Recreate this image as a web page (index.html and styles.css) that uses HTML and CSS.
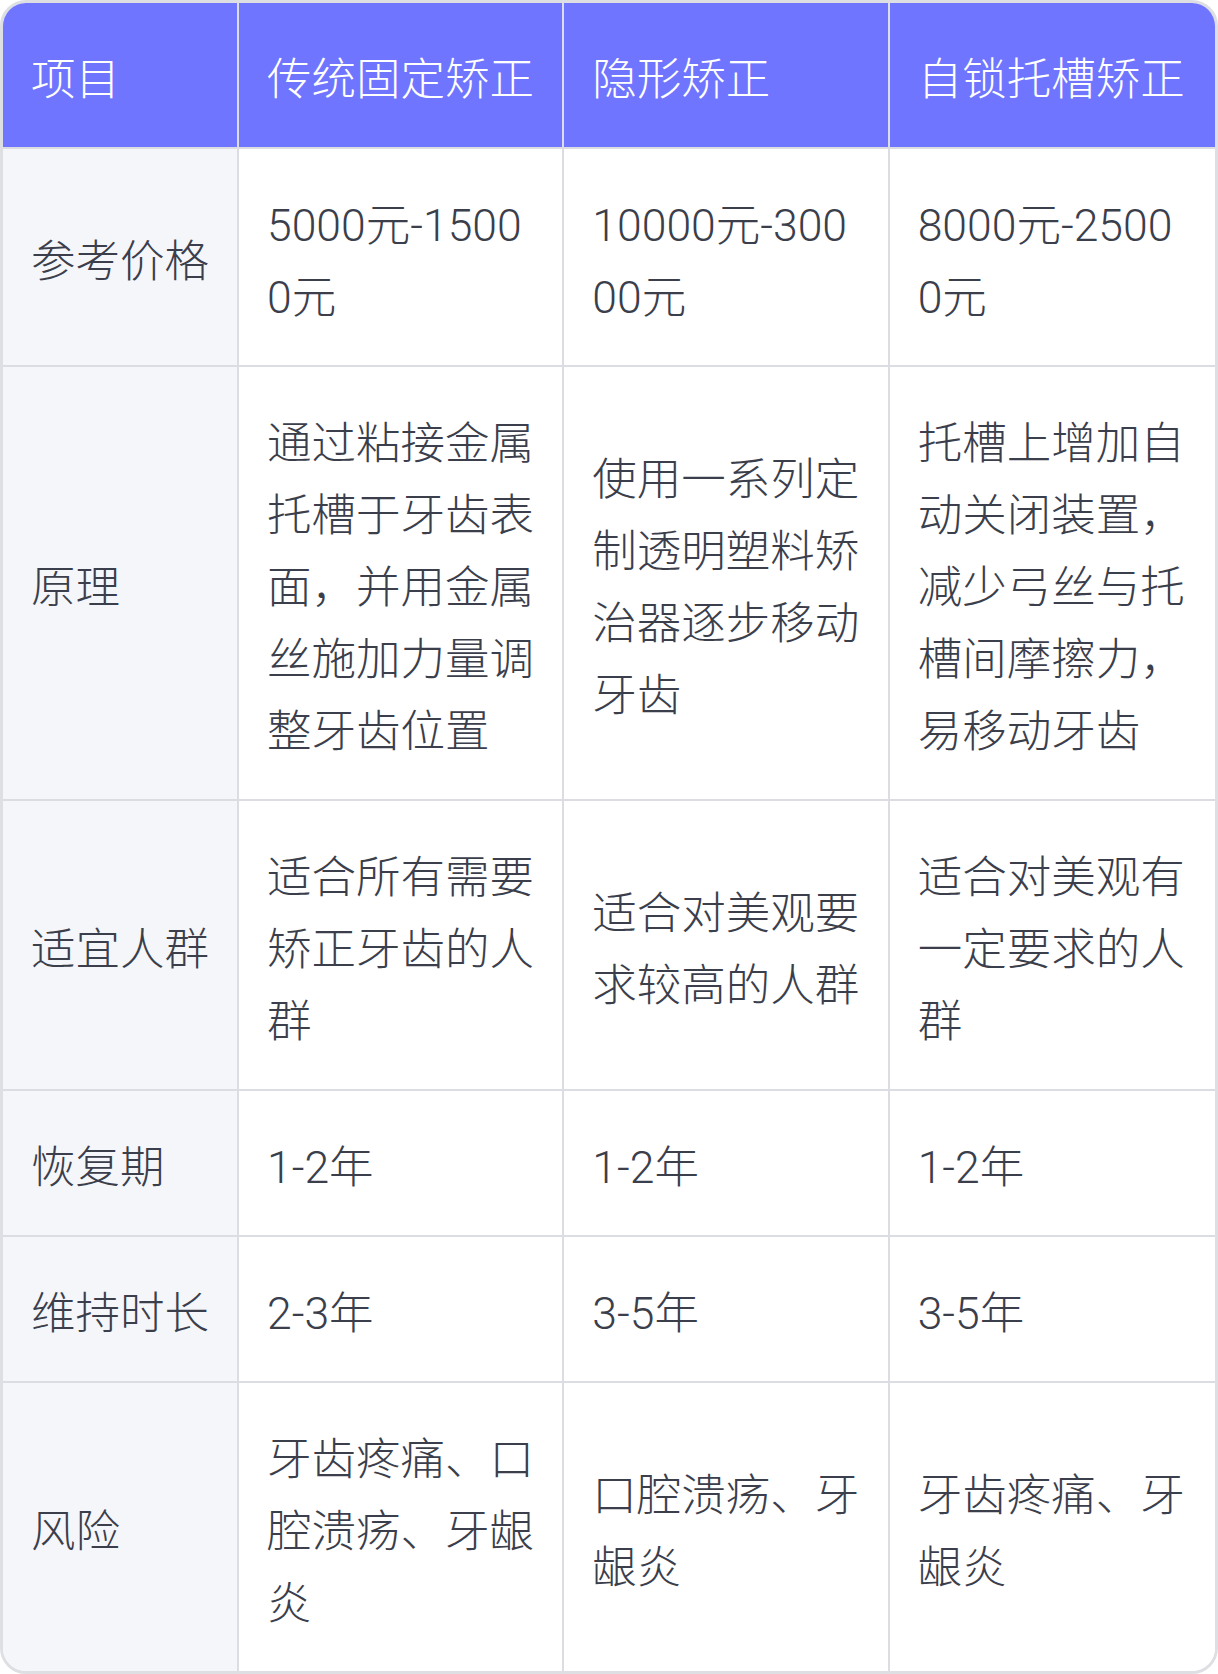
FILE: index.html
```html
<!DOCTYPE html>
<html lang="zh-CN">
<head>
<meta charset="utf-8">
<title>矫正方式对比</title>
<link rel="stylesheet" href="styles.css">
</head>
<body>
<div class="wrap">
<table class="cmp">
<thead>
<tr><th>项目</th><th>传统固定矫正</th><th>隐形矫正</th><th>自锁托槽矫正</th></tr>
</thead>
<tbody>
<tr><td>参考价格</td><td>5000元-15000元</td><td>10000元-30000元</td><td>8000元-25000元</td></tr>
<tr><td>原理</td><td>通过粘接金属托槽于牙齿表面，并用金属丝施加力量调整牙齿位置</td><td>使用一系列定制透明塑料矫治器逐步移动牙齿</td><td>托槽上增加自动关闭装置，减少弓丝与托槽间摩擦力，易移动牙齿</td></tr>
<tr><td>适宜人群</td><td>适合所有需要矫正牙齿的人群</td><td>适合对美观要求较高的人群</td><td>适合对美观有一定要求的人群</td></tr>
<tr><td>恢复期</td><td>1-2年</td><td>1-2年</td><td>1-2年</td></tr>
<tr><td>维持时长</td><td>2-3年</td><td>3-5年</td><td>3-5年</td></tr>
<tr><td>风险</td><td>牙齿疼痛、口腔溃疡、牙龈炎</td><td>口腔溃疡、牙龈炎</td><td>牙齿疼痛、牙龈炎</td></tr>
</tbody>
</table>
</div>
</body>
</html>
```

FILE: styles.css
```css
html, body {
  margin: 0;
  padding: 0;
  background: #ffffff;
}

.wrap {
  width: 1218px;
  box-sizing: border-box;
  border: 3px solid #dedfe3;
  border-radius: 26px;
  overflow: hidden;
}

.cmp {
  width: 100%;
  border-collapse: separate;
  border-spacing: 0;
  table-layout: fixed;
  font-family: Roboto, "Noto Sans CJK SC", "Noto Sans", sans-serif;
  font-size: 44.5px;
  line-height: 72px;
  color: #3b3e4b;
}

.cmp th,
.cmp td {
  text-align: left;
  vertical-align: middle;
  font-weight: 300;
  padding: 41px 28px 31px;
  border-right: 2px solid #dcdde2;
  border-bottom: 2px solid #dcdde2;
  word-break: break-all;
  line-break: anywhere;
}

.cmp th:last-child,
.cmp td:last-child {
  border-right: 0;
}

.cmp tbody tr:last-child td {
  border-bottom: 0;
}

.cmp th {
  background: #6f75ff;
  color: #ffffff;
}

.cmp th:first-child { width: 178px; }

.cmp td:first-child {
  background: #f5f6fa;
}

.cmp td {
  background: #ffffff;
}
```
